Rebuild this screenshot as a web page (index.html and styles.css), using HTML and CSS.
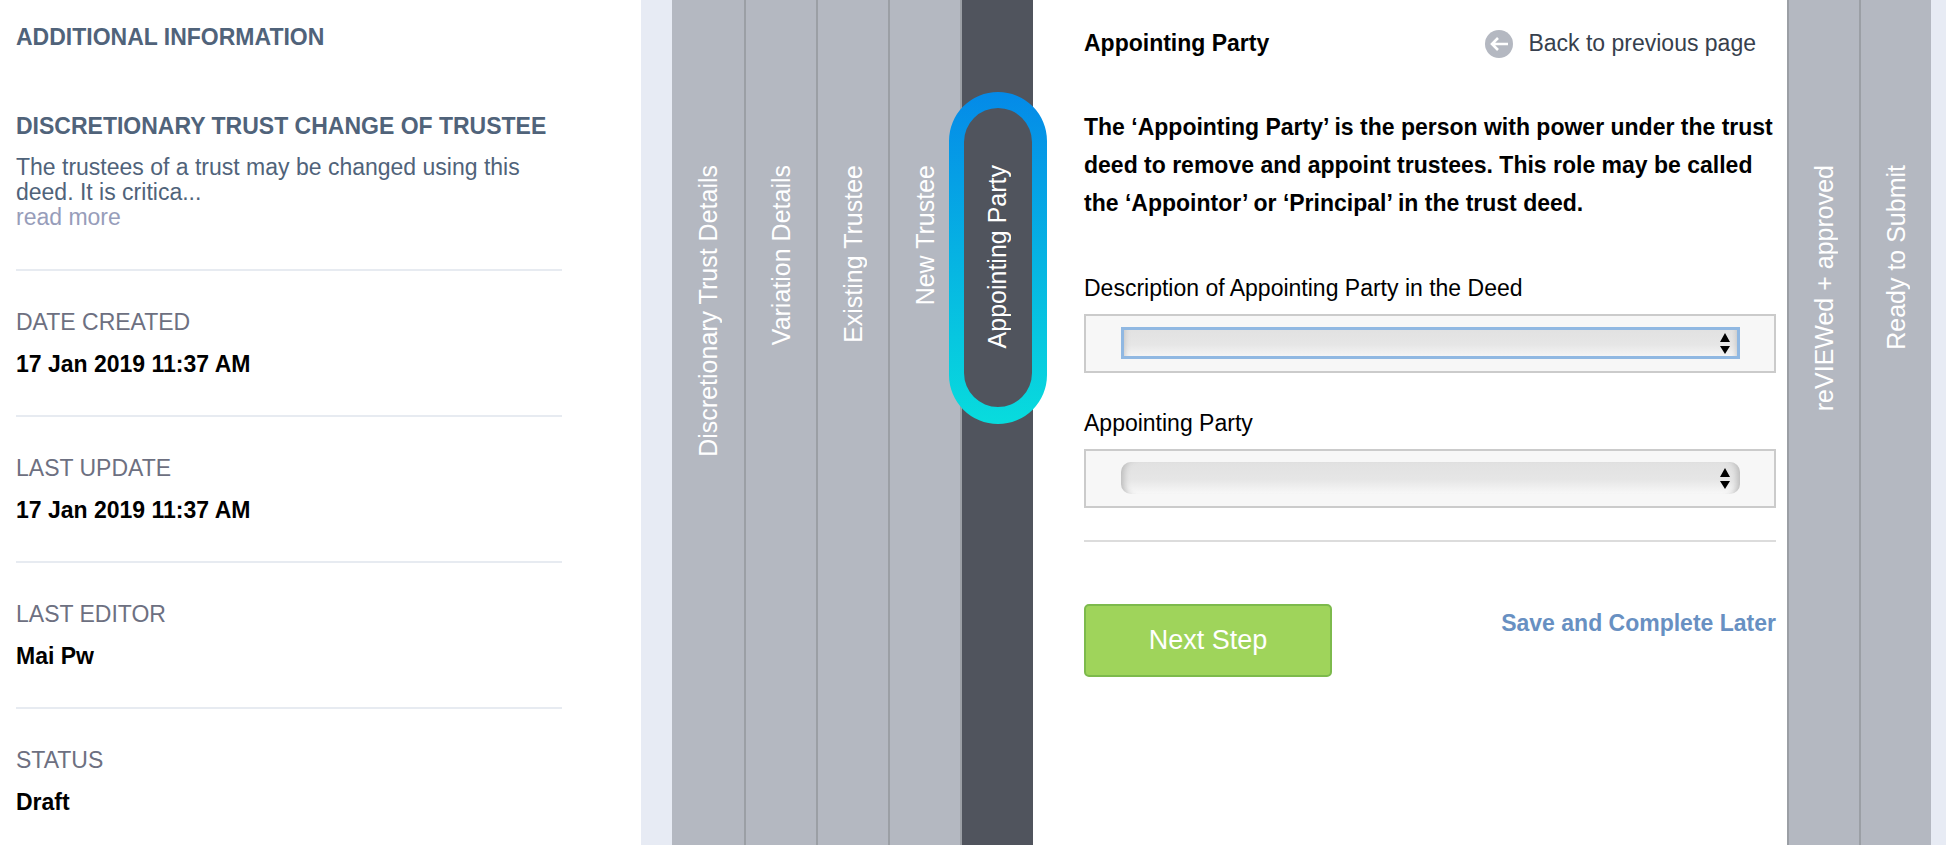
FILE: index.html
```html
<!DOCTYPE html>
<html lang="en">
<head>
  <meta charset="UTF-8" />
  <meta name="viewport" content="width=device-width, initial-scale=1.0"/>
  <title>Appointing Party</title>
  <link rel="stylesheet" href="styles.css">
</head>
<body>

  <!-- Document info -->
  <aside class="sidebar">
    <h2>ADDITIONAL INFORMATION</h2>
    <section class="summary">
      <h3>DISCRETIONARY TRUST CHANGE OF TRUSTEE</h3>
      <p>The trustees of a trust may be changed using this deed. It is critica...</p>
      <a href="#">read more</a>
    </section>
    <dl>
      <div class="info">
        <dt>DATE CREATED</dt>
        <dd>17 Jan 2019 11:37 AM</dd>
      </div>
      <div class="info">
        <dt>LAST UPDATE</dt>
        <dd>17 Jan 2019 11:37 AM</dd>
      </div>
      <div class="info">
        <dt>LAST EDITOR</dt>
        <dd>Mai Pw</dd>
      </div>
      <div class="info">
        <dt>STATUS</dt>
        <dd>Draft</dd>
      </div>
    </dl>
  </aside>

  <!-- Step wizard -->
  <main class="wizard">
    <nav class="steps">
      <button type="button" class="step"><span>Discretionary Trust Details</span></button>
      <button type="button" class="step"><span>Variation Details</span></button>
      <button type="button" class="step"><span>Existing Trustee</span></button>
      <button type="button" class="step"><span>New Trustee</span></button>
      <button type="button" class="step active" aria-current="step">
        <span>Appointing Party</span>
        <svg class="ring" width="98" height="332" viewBox="0 0 98 332" aria-hidden="true">
          <defs>
            <linearGradient id="ringFill" x1="0" y1="0" x2="0" y2="1">
              <stop offset="0" stop-color="#048ae8"/>
              <stop offset="1" stop-color="#08dcdd"/>
            </linearGradient>
          </defs>
          <path fill="url(#ringFill)" fill-rule="evenodd" d="M0 49a49 49 0 0 1 98 0v234a49 49 0 0 1-98 0zM15 50v231a34 34 0 0 0 68 0V50a34 34 0 0 0-68 0z"/>
        </svg>
      </button>
    </nav>

    <section class="panel">
      <header class="panel-head">
        <h1>Appointing Party</h1>
        <a href="#" class="back">
          <svg width="28" height="28" viewBox="0 0 28 28" aria-hidden="true">
            <circle cx="14" cy="14" r="14" fill="#b4b8c1"/>
            <path d="M23 14H7M13 8l-6 6 6 6" fill="none" stroke="#fff" stroke-width="2.6"/>
          </svg>
          Back to previous page
        </a>
      </header>

      <p class="intro">The ‘Appointing Party’ is the person with power under the trust deed to remove and appoint trustees. This role may be called the ‘Appointor’ or ‘Principal’ in the trust deed.</p>

      <form>
        <div class="field">
          <label for="description">Description of Appointing Party in the Deed</label>
          <div class="select-box">
            <select id="description" class="focused"><option></option></select>
            <svg class="arrows" width="10" height="21" viewBox="0 0 10 21" aria-hidden="true">
              <path d="M5 0l5 9H0zM0 13h10l-5 8z"/>
            </svg>
          </div>
        </div>
        <div class="field">
          <label for="party">Appointing Party</label>
          <div class="select-box">
            <select id="party"><option></option></select>
            <svg class="arrows" width="10" height="21" viewBox="0 0 10 21" aria-hidden="true">
              <path d="M5 0l5 9H0zM0 13h10l-5 8z"/>
            </svg>
          </div>
        </div>
        <div class="actions">
          <button type="submit" class="next">Next Step</button>
          <a href="#" class="save">Save and Complete Later</a>
        </div>
      </form>
    </section>

    <nav class="steps">
      <button type="button" class="step"><span>reVIEWed + approved</span></button>
      <button type="button" class="step"><span>Ready to Submit</span></button>
    </nav>
  </main>

</body>
</html>
```
FILE: styles.css
```css
* {
  margin: 0;
  padding: 0;
  box-sizing: border-box;
}

body {
  display: flex;
  min-height: 100vh;
  background-color: #fff;
  color: #000;
  font-family: "Liberation Sans", Arial, sans-serif;
  font-size: 23px;
  line-height: 26px;
}

h1, h2, h3 {
  font-size: 23px;
}

a {
  text-decoration: none;
}

/* Sidebar */
.sidebar {
  flex: 0 0 641px;
  padding: 24px 79px 0 16px;
}

.sidebar h2,
.summary {
  color: #50637a;
}

.summary {
  margin: 63px 0 39px;
  line-height: 25px;
}

.summary h3 {
  margin-bottom: 16px;
  line-height: 26px;
}

.summary a {
  display: block;
  color: #979dba;
}

.info {
  border-top: 2px solid #e7ebf1;
  padding: 38px 0;
}

.info:last-child {
  padding-bottom: 0;
}

.info dt {
  margin-bottom: 16px;
  color: #6d7081;
}

.info dd {
  font-weight: bold;
}

/* Wizard */
.wizard {
  flex: 1;
  display: flex;
  border-left: 31px solid #e7ebf4;
  border-right: 15px solid #e7ebf4;
}

.steps {
  display: flex;
}

.step {
  position: relative;
  display: flex;
  justify-content: center;
  align-items: flex-start;
  width: 72px;
  padding-top: 165px;
  border: none;
  border-left: 2px solid #9b9fa5;
  background-color: #b4b8c1;
  color: #fff;
  font-family: inherit;
  font-size: 25px;
  line-height: 30px;
  cursor: pointer;
}

.steps:first-child .step:first-child {
  border-left: none;
}

/* labels read from bottom to top */
.step span {
  writing-mode: vertical-rl;
  transform: rotate(180deg);
  white-space: nowrap;
}

.step.active {
  width: 73px;
  padding-right: 2px;
  background-color: #50545d;
}

.ring {
  position: absolute;
  top: 92px;
  left: -13px;
  z-index: 1;
}

/* Form panel */
.panel {
  flex: 1;
  padding: 30px 11px 30px 51px;
}

.panel-head {
  display: flex;
  justify-content: space-between;
  padding-right: 20px;
}

.back {
  display: flex;
  gap: 15px;
  color: #373f4d;
}

.intro {
  margin: 50px 0 53px;
  font-weight: bold;
  line-height: 38px;
}

.field + .field {
  margin-top: 37px;
}

.field label {
  display: block;
  margin-bottom: 13px;
}

.select-box {
  position: relative;
  padding: 11px 34px 12px 35px;
  border: 2px solid #cbcbcb;
  background-color: #f7f7f7;
}

.select-box select {
  display: block;
  width: 100%;
  height: 32px;
  border: none;
  border-radius: 10px;
  appearance: none;
  background: linear-gradient(#e1e1e1, #e6e6e6 55%, #f8f8f8);
  box-shadow: inset 9px 0 6px -6px #bbb, inset -9px 0 6px -6px #bbb;
  font-size: 23px;
}

.select-box select.focused {
  border-radius: 0;
  outline: 3px solid #90b8e2;
  outline-offset: -3px;
}

.arrows {
  position: absolute;
  top: 17px;
  right: 44px;
  pointer-events: none;
}

.actions {
  display: flex;
  justify-content: space-between;
  align-items: flex-start;
  margin-top: 32px;
  padding-top: 62px;
  border-top: 2px solid #dcdcdc;
}

.next {
  width: 248px;
  height: 73px;
  border: 2px solid #7dba4c;
  border-radius: 5px;
  background-color: #9fd45b;
  color: #fff;
  font-family: inherit;
  font-size: 27px;
  cursor: pointer;
}

.save {
  margin-top: 6px;
  color: #6890c2;
  font-weight: bold;
}
```
